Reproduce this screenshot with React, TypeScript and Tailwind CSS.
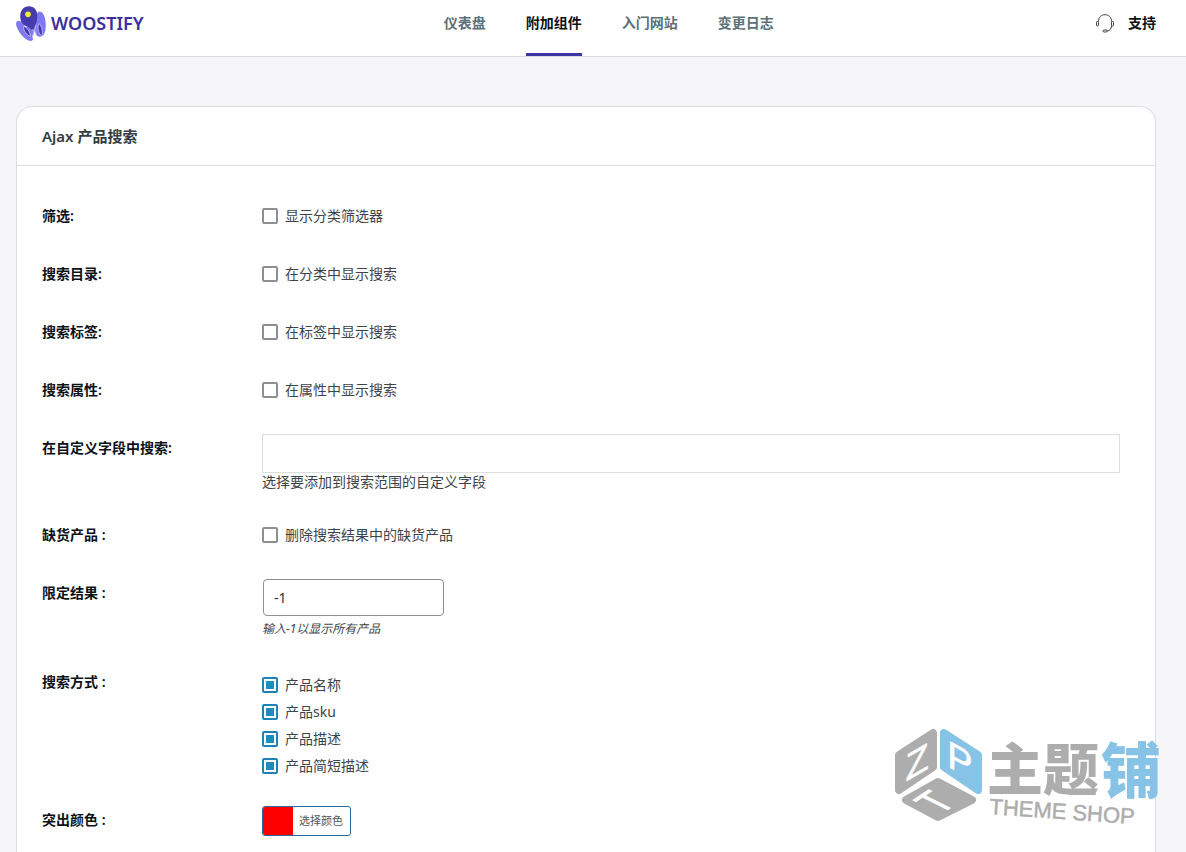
import type { ReactNode } from 'react';

const tabs = [
  { label: '仪表盘', active: false },
  { label: '附加组件', active: true },
  { label: '入门网站', active: false },
  { label: '变更日志', active: false },
];

const checkboxClass =
  'size-4 shrink-0 appearance-none rounded-xs border-2 border-[#8c8f94] bg-white checked:border-[#1e82b4] checked:bg-[#1e8cbe] checked:shadow-[inset_0_0_0_2px_#fff]';

function Logo() {
  return (
    <svg viewBox="0 0 90 108" className="h-9 w-[30px]" aria-hidden="true">
      <path d="M3 46C12 38 26 58 34 74C40 85 56 94 50 102C44 109 29 102 20 91C9 79-6 54 3 46Z" fill="#7f78f2" />
      <path d="M64 21C70 11 82 17 86 34C91 52 91 77 82 88C77 94 66 94 60 86C54 77 58 35 64 21Z" fill="#7f78f2" />
      <path d="M30 62L58 58L56 76L47 98L34 78Z" fill="#7f78f2" />
      <path d="M37 1C54 0 64 13 64 30C64 46 59 56 54 66C51 72 45 73 41 67C35 60 18 60 14 43C9 20 19 2 37 1Z" fill="#463bac" />
      <path d="M23 61C33 63 42 76 43 91C32 88 21 73 23 61Z" fill="#463bac" stroke="#d8d5ff" strokeWidth="2" />
      <path d="M69 53C78 60 82 78 77 90C67 83 63 64 69 53Z" fill="#463bac" stroke="#d8d5ff" strokeWidth="2" />
      <path d="M47 71L54 76L48 98M60 57L56 74L62 87" fill="none" stroke="#d8d5ff" strokeWidth="2" />
      <circle cx="36" cy="25" r="8.5" fill="#f3eb2f" />
    </svg>
  );
}

function Headset() {
  return (
    <svg viewBox="0 0 18 19" className="h-[19px] w-[18px]" fill="none" stroke="#3c3f44" strokeWidth="1" aria-hidden="true">
      <path d="M2.500 7.500C2.500 3.500 5 .7 9 .7S15.500 3.500 15.500 7.500" />
      <rect x=".5" y="7.500" width="2" height="4.500" rx=".8" />
      <rect x="15.500" y="7.500" width="2" height="4.500" rx=".8" />
      <path d="M15.500 12C15.500 15 13.500 16.800 11 17" />
      <rect x="7" y="16" width="4" height="2" rx="1" />
    </svg>
  );
}

function Watermark() {
  return (
    <svg viewBox="0 -20 276 140" className="pointer-events-none absolute top-[704px] right-[18px] h-[140px] w-[276px]" aria-hidden="true">
      <g strokeLinejoin="round" strokeWidth="8">
        <path d="M7 31L41 9V43L7 66Z" fill="#adadad" stroke="#adadad" />
        <path d="M52 9L86 31V66L52 43Z" fill="#86c3e6" stroke="#86c3e6" />
        <path d="M46 58L80 76L46 93L14 76Z" fill="#adadad" stroke="#adadad" />
      </g>
      <g fill="#fff" stroke="#fff" strokeWidth=".6" fontFamily="'Liberation Sans', sans-serif" fontSize="38" textAnchor="middle">
        <text transform="translate(25 51) skewY(-30)">Z</text>
        <text transform="translate(68 49) skewY(28)">P</text>
        <text transform="matrix(.75 -.5 1.08 .54 57 85)">T</text>
      </g>
      <g fontFamily="'Noto Sans CJK SC', sans-serif" fontWeight="900">
        <text x="95" y="66" fill="#adadad" fontSize="56">主题</text>
        <text x="209" y="69" fill="#86c3e6" fontSize="60">铺</text>
      </g>
      <text transform="translate(97 90) rotate(4)" fill="#adadad" stroke="#adadad" strokeWidth=".5" fontFamily="'Liberation Sans', sans-serif" fontSize="22">
        THEME SHOP
      </text>
    </svg>
  );
}

function Row({ label, htmlFor, children }: { label: string; htmlFor: string; children: ReactNode }) {
  return (
    <div className="flex">
      <label htmlFor={htmlFor} className="w-[220px] shrink-0 leading-7 font-semibold text-[#0c1118]">
        {label}
      </label>
      <div className="min-w-0 flex-1">{children}</div>
    </div>
  );
}

function Check({ id, text, checked = false, compact = false }: { id: string; text: string; checked?: boolean; compact?: boolean }) {
  return (
    <div className={compact ? 'flex h-5 items-center gap-[7px]' : 'flex h-7 items-center gap-[7px]'}>
      <input id={id} type="checkbox" defaultChecked={checked} className={checkboxClass} />
      <label htmlFor={id}>{text}</label>
    </div>
  );
}

export default function App() {
  return (
    <div className="relative flex min-h-screen flex-col bg-[#f6f6f9] font-['Noto_Sans','Noto_Sans_CJK_SC',sans-serif] text-sm text-[#3c434a]">
      <header className="flex h-[57px] items-start justify-between border-b border-[#dcdcde] bg-white pr-[30px] pl-4">
        <a href="#home" className="mt-1.5 flex items-center gap-[5px] text-lg font-semibold text-[#3a2f9b]">
          <Logo />
          <span className="pb-0.5">WOOSTIFY</span>
        </a>
        <nav className="flex gap-10 self-stretch">
          {tabs.map((tab) => (
            <a
              key={tab.label}
              href={`#${tab.label}`}
              className={
                tab.active
                  ? 'border-b-3 border-[#3d34a5] pt-3 leading-[22px] font-semibold text-[#0c1118]'
                  : 'pt-3 leading-[22px] font-semibold text-[#5d7079]'
              }
            >
              {tab.label}
            </a>
          ))}
        </nav>
        <a href="#support" className="flex items-center gap-3.5 pt-3 pl-[22px] leading-[22px] font-semibold text-[#0c1118]">
          <Headset />
          支持
        </a>
      </header>

      <main className="mt-[49px] mr-[30px] ml-4 flex-1 rounded-t-2xl border border-b-0 border-[#dcdee2] bg-white">
        <h1 className="border-b border-[#dcdee2] px-[25px] py-[17px] text-[15px] leading-6 font-semibold text-[#353c43]">Ajax 产品搜索</h1>
        <form className="flex flex-col gap-[30px] pt-9 pr-[35px] pb-4 pl-[25px]">
          <Row label="筛选:" htmlFor="filter">
            <Check id="filter" text="显示分类筛选器" />
          </Row>
          <Row label="搜索目录:" htmlFor="category">
            <Check id="category" text="在分类中显示搜索" />
          </Row>
          <Row label="搜索标签:" htmlFor="tag">
            <Check id="tag" text="在标签中显示搜索" />
          </Row>
          <Row label="搜索属性:" htmlFor="attribute">
            <Check id="attribute" text="在属性中显示搜索" />
          </Row>
          <Row label="在自定义字段中搜索:" htmlFor="fields">
            <input id="fields" type="text" className="block h-[39px] w-full border border-[#dcdee2] bg-white px-3" />
            <p className="leading-[18px]">选择要添加到搜索范围的自定义字段</p>
          </Row>
          <Row label="缺货产品 :" htmlFor="stock">
            <Check id="stock" text="删除搜索结果中的缺货产品" />
          </Row>
          <Row label="限定结果 :" htmlFor="limit">
            <input
              id="limit"
              type="text"
              defaultValue="-1"
              className="ml-px block h-[37px] w-[181px] rounded-sm border border-[#8c8f94] bg-white px-2.5 text-[#2c3338]"
            />
            <p className="mt-1 text-xs leading-[18px] italic">输入-1以显示所有产品</p>
          </Row>
          <Row label="搜索方式 :" htmlFor="by-name">
            <div className="flex flex-col gap-[7px] pt-[7px]">
              <Check id="by-name" text="产品名称" checked compact />
              <Check id="by-sku" text="产品sku" checked compact />
              <Check id="by-description" text="产品描述" checked compact />
              <Check id="by-short" text="产品简短描述" checked compact />
            </div>
          </Row>
          <Row label="突出颜色 :" htmlFor="color">
            <button
              id="color"
              type="button"
              className="flex h-[30px] items-stretch overflow-hidden rounded-[3px] border border-[#2a6a9c] bg-white text-[11px] leading-7 text-[#50575e]"
            >
              <span className="w-[30px] bg-[#ff0000]" />
              <span className="pr-[7px] pl-1.5">选择颜色</span>
            </button>
          </Row>
        </form>
      </main>
      <Watermark />
    </div>
  );
}
